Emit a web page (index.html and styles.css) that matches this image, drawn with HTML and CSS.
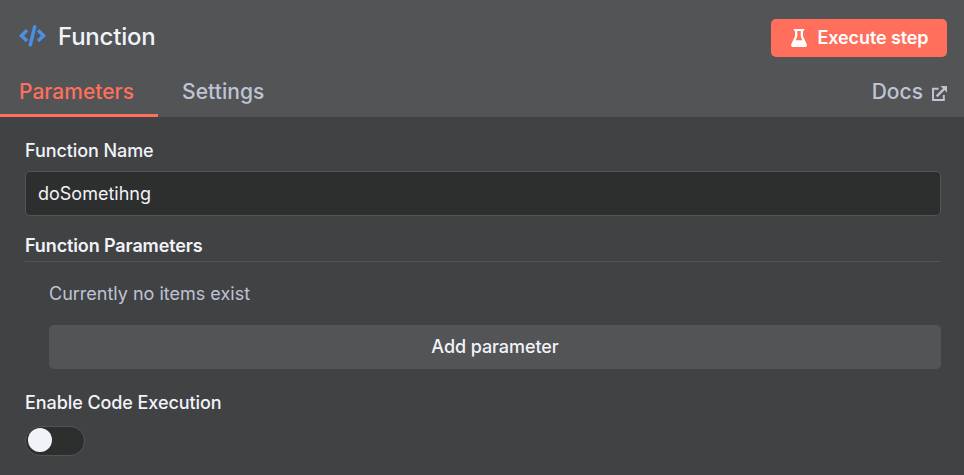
FILE: index.html
```html
<!DOCTYPE html>
<html lang="en">
<head>
<meta charset="utf-8">
<title>Function</title>
<link rel="stylesheet" href="styles.css">
</head>
<body>
<main class="panel">
  <header class="header">
    <div class="title-row">
      <svg class="code-icon" viewBox="0 0 27 22" fill="none" stroke="currentColor">
        <path d="M8 5.300 2.500 10.700 8 16.100M19 5.300l5.500 5.400-5.500 5.400" stroke-width="3.500"/>
        <path d="M15.700 1.900 11.300 19.900" stroke-width="3.500" stroke-linecap="round"/>
      </svg>
      <h1 class="title">Function</h1>
      <button class="execute" type="button">
        <svg class="flask-icon" viewBox="0 0 16 18" fill="currentColor">
          <path fill-rule="evenodd" d="M3.700 0h8.600a1 1 0 0 1 0 2H12v5.100l3.700 8.100C16.300 16.700 15.500 18 14 18H2C.5 18-.3 16.700.3 15.200L4 7.100V2h-.3a1 1 0 0 1 0-2zM6.300 2v5.500L4.700 11.300h6.600L9.700 7.500V2z"/>
        </svg>
        <span>Execute step</span>
      </button>
    </div>
    <nav class="tabs">
      <a class="tab tab-active">Parameters</a>
      <a class="tab tab-settings">Settings</a>
      <a class="tab docs">Docs
        <svg class="link-icon" viewBox="0 0 16 16" fill="none" stroke="currentColor" stroke-width="2.100">
          <path d="M7 3H1.100v11.900h11.500V9.500"/>
          <path d="M5 11 13 3" stroke-width="2.500"/>
          <path d="M9 0H16v7z" fill="currentColor" stroke="none"/>
        </svg>
      </a>
    </nav>
  </header>
  <section class="content">
    <label class="label" for="fn-name">Function Name</label>
    <input class="input" id="fn-name" type="text" value="doSometihng" spellcheck="false">
    <h2 class="section-title">Function Parameters</h2>
    <div class="collection">
      <p class="empty">Currently no items exist</p>
      <button class="add" type="button">Add parameter</button>
    </div>
    <div class="label label-toggle">Enable Code Execution</div>
    <div class="toggle" role="switch" aria-checked="false"><span class="knob"></span></div>
  </section>
</main>
</body>
</html>
```
FILE: styles.css
```css
* { box-sizing: border-box; }

body {
  margin: 0;
  background: #414244;
  color: #f1f3f9;
  font-family: Inter, "Liberation Sans", sans-serif;
  font-size: 18px;
}

.panel { height: 475px; overflow: hidden; }

.header {
  display: flex;
  flex-direction: column;
  height: 117px;
  background: #535456;
}

.title-row {
  display: flex;
  align-items: center;
  height: 38px;
  margin: 19px 17px 0 19px;
}

.code-icon { width: 27px; height: 22px; margin-bottom: 4px; color: #4a90e2; }

.title {
  margin: 0 auto 2px 12px;
  font-size: 24px;
  font-weight: 550;
  letter-spacing: -0.2px;
  line-height: 30px;
}

.execute {
  display: flex;
  align-items: center;
  justify-content: center;
  gap: 10px;
  width: 176px;
  height: 38px;
  padding: 0 0 0 2px;
  border: 0;
  border-radius: 5px;
  background: #ff6f5c;
  color: #fff;
  font: 600 18px/24px Inter, sans-serif;
  letter-spacing: -0.1px;
}

.flask-icon { width: 16px; height: 18px; }

.tabs {
  display: flex;
  flex: 1;
  margin-right: 17px;
  color: #bec4d4;
  font-size: 21px;
  font-weight: 500;
  line-height: 28px;
}

.tab { padding: 21px 24px 0; }

.tab-active {
  width: 158px;
  padding-left: 19px;
  border-bottom: 3px solid #ff6f5c;
  color: #ff6f5c;
}

.tab-settings { letter-spacing: 0.08px; }

.docs {
  display: flex;
  gap: 9px;
  margin-left: auto;
  padding-right: 0;
}

.link-icon { width: 15px; height: 15px; margin-top: 8px; }

.content {
  display: flex;
  flex-direction: column;
  padding: 22px 23px 0 25px;
}

.label { font-weight: 500; letter-spacing: -0.08px; line-height: 24px; }

.input {
  height: 45px;
  margin-top: 8px;
  padding: 0 12px;
  border: 1px solid #535456;
  border-radius: 5px;
  outline: none;
  background: #2d2e2e;
  color: #f1f3f9;
  font: 400 18px/24px Inter, sans-serif;
}

.section-title {
  height: 28px;
  margin: 18px 0 0;
  border-bottom: 1px solid #535456;
  font-size: 18px;
  font-weight: 600;
  letter-spacing: -0.12px;
  line-height: 24px;
}

.collection {
  display: flex;
  flex-direction: column;
  padding: 20px 0 0 24px;
}

.empty { margin: 0; color: #bec4d4; line-height: 24px; }

.add {
  height: 44px;
  margin-top: 19px;
  padding: 0;
  border: 0;
  border-radius: 5px;
  background: #535456;
  color: #f1f3f9;
  font: 500 18px/24px Inter, sans-serif;
  letter-spacing: -0.08px;
}

.label-toggle { margin-top: 22px; }

.toggle {
  display: flex;
  align-items: flex-start;
  width: 60px;
  height: 30px;
  margin-top: 11px;
  padding: 1px 2px 0;
  border: 1px solid #535456;
  border-radius: 15px;
  background: #2d2e2e;
}

.knob {
  width: 24px;
  height: 24px;
  border-radius: 50%;
  background: #f1f3f9;
}
```
